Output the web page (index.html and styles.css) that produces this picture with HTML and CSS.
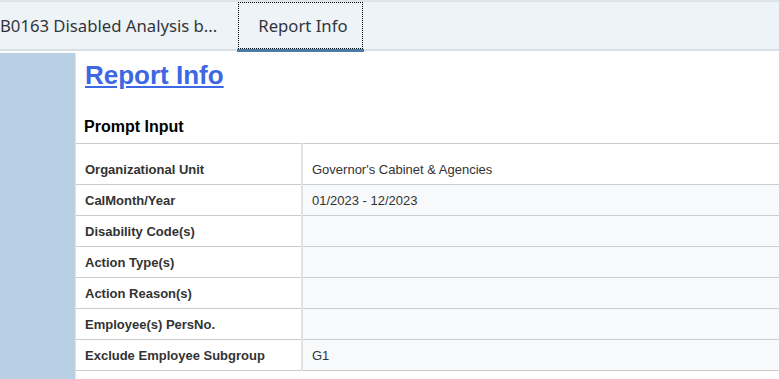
FILE: index.html
```html
<!DOCTYPE html>
<html lang="en">
<head>
  <meta charset="UTF-8" />
  <title>Report Info</title>
  <link rel="stylesheet" href="styles.css">
</head>
<body>
  <div class="tabbar">
    <div class="tab">B0163 Disabled Analysis b...</div>
    <div class="tab active"><span class="tab-label">Report Info</span></div>
  </div>

  <div class="page">
    <div class="sidebar"></div>
    <div class="content">
      <h1><a href="#" class="title">Report Info</a></h1>
      <h2>Prompt Input</h2>
      <table class="prompts">
        <tr class="first"><th>Organizational Unit</th><td>Governor's Cabinet &amp; Agencies</td></tr>
        <tr><th>CalMonth/Year</th><td>01/2023 - 12/2023</td></tr>
        <tr><th>Disability Code(s)</th><td></td></tr>
        <tr><th>Action Type(s)</th><td></td></tr>
        <tr><th>Action Reason(s)</th><td></td></tr>
        <tr><th>Employee(s) PersNo.</th><td></td></tr>
        <tr><th>Exclude Employee Subgroup</th><td>G1</td></tr>
      </table>
    </div>
  </div>
</body>
</html>
```

FILE: styles.css
```css
body {
  margin: 0;
  font-family: "Liberation Sans", Arial, sans-serif;
  color: #333;
  background: #fff;
  overflow: hidden;
}
.tabbar {
  display: flex;
  height: 47px;
  background: #eef3f8;
  border-top: 2px solid #dde4ec;
  border-bottom: 2px solid #d8e0e6;
  font-family: "Noto Sans", "Open Sans", sans-serif;
  font-size: 16.7px;
  color: #32363a;
}
.tab {
  display: flex;
  align-items: center;
  padding: 0 21px 0 0;
  white-space: nowrap;
}
.tab.active {
  padding: 0;
  position: relative;
}
.tab-label {
  display: flex;
  align-items: center;
  height: 45px;
  padding: 0 15px 0 19px;
  border: 1px dotted #000;
}
.tab.active::after {
  content: '';
  position: absolute;
  left: -1px; right: -1px; bottom: -3px;
  height: 3px;
  background: #4a7aa5;
}
.page {
  display: flex;
  margin-top: 2px;
  height: 330px;
}
.sidebar {
  width: 75px;
  background: #b9cfe3;
}
.content {
  flex: 1;
  border-left: 1px solid #dde5ec;
}
h1 {
  margin: 7px 0 0 9px;
  font-size: 26px;
  line-height: 30px;
}
.title {
  color: #3d68e3;
}
h2 {
  margin: 27px 0 0 8px;
  font-size: 16px;
  line-height: 20px;
  color: #000;
}
.prompts {
  margin-top: 6px;
  width: 100%;
  border-collapse: collapse;
  font-size: 13px;
}
.prompts tr {
  height: 31px;
  border-top: 1px solid #ccc;
  border-bottom: 1px solid #ccc;
}
.prompts th {
  width: 216px;
  padding: 0 0 0 9px;
  text-align: left;
  vertical-align: middle;
  border-right: 2px solid #e2e2e2;
}
.prompts td {
  padding: 0 0 0 9px;
  background: #f7f9fb;
  color: #333;
}
.prompts tr.first {
  height: 41px;
}
.prompts tr.first th, .prompts tr.first td {
  padding-top: 10px;
  background: #fff;
}
```
